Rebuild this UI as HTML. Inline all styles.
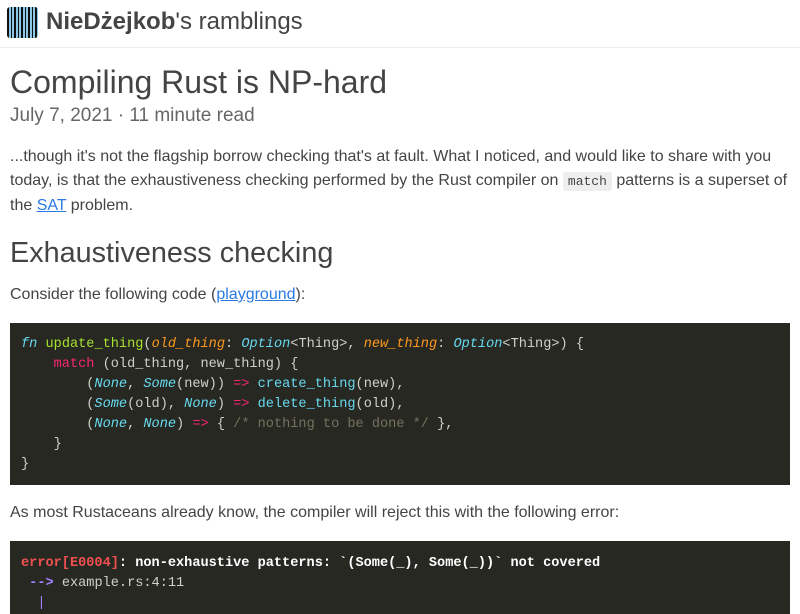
<!DOCTYPE html>
<html><head><style>
body{margin:0;background:#fff;font-family:"Liberation Sans",sans-serif;color:#444;overflow:hidden}
.hdr{height:47px;border-bottom:1px solid #eee;position:relative}
.logo{position:absolute;left:7px;top:7px;width:31px;height:31px;border-radius:3px;background:repeating-linear-gradient(90deg,#111 0 2px,#8cc8e8 2px 4px,#111 4px 5px,#8cc8e8 5px 7px);}
.title{position:absolute;left:46px;top:8px;font-size:24px;color:#444}
h1{font-weight:normal;font-size:32px;margin:0;position:absolute;top:64px;left:10px;color:#444}
.date{position:absolute;top:105px;left:10px;font-size:19px;color:#666}
p{font-size:16px;line-height:24px;margin:0;color:#444}
a{color:#2a7ae2}
code.i{font-family:"Liberation Mono",monospace;font-size:13px;background:#eee;padding:2px 5px;border-radius:3px}
h2{font-weight:normal;font-size:28.8px;margin:0;color:#444}
pre{background:#272822;color:#d0d0c8;font-family:"Liberation Mono",monospace;font-size:13.6px;line-height:20px;margin:0;padding:12px 11px 0;}
.k{color:#66d9ef;font-style:italic}.f{color:#a6e22e}.p{color:#fd971f;font-style:italic}.m{color:#f92672}.c{color:#75715e}.fn{color:#66d9ef}
</style></head><body>
<div class="hdr"><div class="logo"></div><div class="title"><b>NieDżejkob</b>'s ramblings</div></div>
<h1>Compiling Rust is NP-hard</h1>
<div class="date">July 7, 2021 · 11 minute read</div>
<p style="position:absolute;top:145px;left:10px;width:785px">...though it's not the flagship borrow checking that's at fault. What I noticed, and would like to share with you today, is that the exhaustiveness checking performed by the Rust compiler on <code class="i">match</code> patterns is a superset of the <a href="#">SAT</a> problem.</p>
<h2 style="position:absolute;top:237px;left:10px">Exhaustiveness checking</h2>
<p style="position:absolute;top:283px;left:10px">Consider the following code (<a href="#">playground</a>):</p>
<pre style="position:absolute;top:323px;left:10px;width:758px;height:150px"><span class="k">fn</span> <span class="f">update_thing</span>(<span class="p">old_thing</span>: <span class="k">Option</span>&lt;Thing&gt;, <span class="p">new_thing</span>: <span class="k">Option</span>&lt;Thing&gt;) {
    <span class="m">match</span> (old_thing, new_thing) {
        (<span class="k">None</span>, <span class="k">Some</span>(new)) <span class="m">=&gt;</span> <span class="fn">create_thing</span>(new),
        (<span class="k">Some</span>(old), <span class="k">None</span>) <span class="m">=&gt;</span> <span class="fn">delete_thing</span>(old),
        (<span class="k">None</span>, <span class="k">None</span>) <span class="m">=&gt;</span> { <span class="c">/* nothing to be done */</span> },
    }
}</pre>
<p style="position:absolute;top:501px;left:10px">As most Rustaceans already know, the compiler will reject this with the following error:</p>
<pre style="position:absolute;top:541px;left:10px;width:758px;height:60px;padding-top:13px"><b><span style="color:#f05050">error[E0004]</span><span style="color:#fff">: non-exhaustive patterns: `(Some(_), Some(_))` not covered</span></b>
 <b style="color:#a080ff">--&gt;</b> example.rs:4:11
  <span style="color:#a080ff">|</span></pre>
</body></html>
